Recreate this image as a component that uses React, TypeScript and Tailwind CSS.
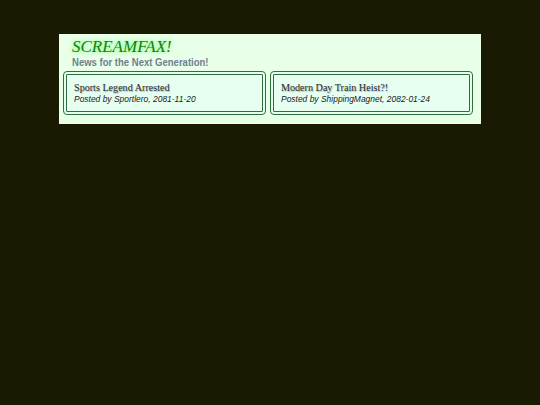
export default function App() {
  const posts = [
    { title: "Sports Legend Arrested", by: "Sportlero", date: "2081-11-20" },
    { title: "Modern Day Train Heist?!", by: "ShippingMagnet", date: "2082-01-24" },
  ];
  return (
    <div className="w-[540px] h-[405px] bg-[#1a1a03] pt-[34px] pl-[59px]">
      <div className="w-[422px] h-[90px] bg-[#e8ffe8] pt-[4px] pl-[4px]">
        <div className="pl-[9px]">
          <div
            className="text-[17px] leading-[17px] italic text-[#137f13] [text-shadow:0_0_4px_#55ff55]"
            style={{ fontFamily: '"Liberation Serif", serif' }}
          >
            SCREAMFAX!
          </div>
          <div
            className="mt-[0.5px] text-[10.5px] leading-[12px] font-bold text-[#708090] whitespace-nowrap origin-left scale-x-[0.907]"
            style={{ fontFamily: '"Liberation Sans", sans-serif' }}
          >
            News for the Next Generation!
          </div>
        </div>
        <div className="grid grid-cols-[203px_203px] gap-[4px] mt-[3px]">
          {posts.map((p) => (
            <div
              key={p.title}
              className="h-[44px] border-[4px] border-double border-[#2f6f3a] rounded-[4px] bg-[#e6fff0] pl-[7px] pt-[6.8px]"
            >
              <div
                className="text-[11px] leading-[12px] text-[#2a2a2a] [text-shadow:1px_1px_1px_#b0b0b0] whitespace-nowrap origin-left scale-x-[0.92]"
                style={{ fontFamily: '"Liberation Serif", serif' }}
              >
                {p.title}
              </div>
              <div
                className="text-[9.5px] leading-[11px] italic text-[#1a1a1a] whitespace-nowrap origin-left scale-x-[0.89]"
                style={{ fontFamily: '"Liberation Sans", sans-serif' }}
              >
                Posted by {p.by}, {p.date}
              </div>
            </div>
          ))}
        </div>
      </div>
    </div>
  );
}
